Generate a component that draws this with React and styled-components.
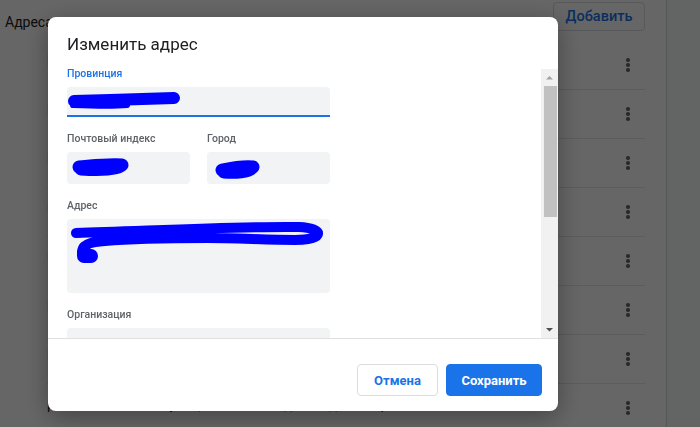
import React from "react";
import styled, { createGlobalStyle } from "styled-components";

const GlobalStyle = createGlobalStyle`
  * { box-sizing: border-box; }
  html, body { margin: 0; height: 100%; }
  body {
    font-family: Roboto, "Noto Sans", Arial, sans-serif;
    background: #fff;
    overflow: hidden;
  }
`;

const addresses = [
  "Россия, г. Москва, ул. Тверская, д. 7, кв. 12",
  "Россия, г. Казань, ул. Баумана, д. 15",
  "Россия, г. Самара, ул. Ленинградская, д. 3",
  "Россия, г. Тула, пр. Ленина, д. 40, кв. 8",
  "Россия, г. Пермь, ул. Сибирская, д. 22",
  "Россия, г. Омск, ул. Лермонтова, д. 9",
  "Россия, г. Томск, ул. Советская, д. 51",
  "россия, г. Москва, улица Новослободская, д. 18, строение 1",
];

const Page = styled.div`
  display: grid;
  grid-template-columns: 667px 1fr;
  height: 100vh;
  background: #f8f9fa;
`;

const Card = styled.section`
  background: #fff;
  border-right: 1px solid #d5d7da;
`;

const CardHeader = styled.header`
  display: flex;
  justify-content: space-between;
  align-items: flex-start;
  height: 41px;
  padding: 0 21px 0 5px;
`;

const CardTitle = styled.h2`
  margin: 13px 0 0;
  font-size: 14px;
  line-height: 18px;
  font-weight: 400;
  color: #202124;
`;

const OutlineButton = styled.button`
  margin-top: 2px;
  width: 92px;
  height: 29px;
  padding: 0;
  border: 1px solid #dadce0;
  border-radius: 4px;
  background: #fff;
  color: #1a73e8;
  font-family: inherit;
  font-size: 14.5px;
  font-weight: 500;
`;

const Row = styled.div`
  display: flex;
  align-items: center;
  justify-content: space-between;
  height: 49px;
  margin: 0 21px 0 47px;
  padding-right: 5px;
  border-bottom: 1px solid #e3e5e8;
  font-size: 14px;
  color: #202124;
`;

const RowText = styled.span`
  margin-bottom: 8px;
`;

const Kebab = styled.span`
  display: flex;
  flex-direction: column;
  align-items: center;
  gap: 1.5px;
  width: 24px;

  i {
    width: 3.5px;
    height: 3.5px;
    border-radius: 50%;
    background: #6a6a6a;
  }
`;

const Overlay = styled.div`
  position: fixed;
  inset: 0;
  display: flex;
  align-items: flex-start;
  padding: 17px 0 0 48px;
  background: rgba(0, 0, 0, 0.6);
`;

const Dialog = styled.div`
  display: flex;
  flex-direction: column;
  width: 510px;
  height: 394px;
  background: #fff;
  border-radius: 8px;
  box-shadow: 0 6px 24px rgba(0, 0, 0, 0.35);
  overflow: hidden;
`;

const DialogTitle = styled.h1`
  margin: 0;
  padding: 15px 19px 12px;
  font-size: 17px;
  line-height: 24px;
  font-weight: 400;
  color: #202124;
`;

const DialogBody = styled.div`
  display: flex;
  flex: 1;
  min-height: 0;
  border-bottom: 1px solid #e0e0e0;
`;

const ScrollArea = styled.div`
  flex: 1;
  overflow: hidden;
`;

const Scrollbar = styled.div`
  display: flex;
  flex-direction: column;
  width: 17px;
  margin-top: 1px;
  background: #f1f1f1;
`;

const ScrollArrow = styled.div`
  height: 17px;
  flex-shrink: 0;

  svg {
    display: block;
  }
`;

const ScrollThumb = styled.div`
  height: 131px;
  margin: 0 1px 0 3px;
  background: #c1c1c1;
`;

const ScrollGap = styled.div`
  flex: 1;
`;

const Form = styled.div`
  display: flex;
  flex-direction: column;
  gap: 16px;
  width: 282px;
  padding: 0 0 56px 19px;
`;

const FieldRow = styled.div`
  display: grid;
  grid-template-columns: 1fr 1fr;
  gap: 17px;
`;

const Group = styled.div`
  display: flex;
  flex-direction: column;
`;

const Label = styled.label`
  margin-bottom: 7px;
  font-size: 10.5px;
  line-height: 12px;
  font-weight: 500;
  color: ${(p) => (p.$active ? "#1a73e8" : "#5f6368")};
`;

const Field = styled.div`
  height: ${(p) => p.$h || 32}px;
  background: #f1f3f4;
  border-radius: ${(p) => (p.$active ? "4px 4px 0 0" : "4px")};
  border-bottom: ${(p) => (p.$active ? "2px solid #1a73e8" : "none")};

  svg {
    display: block;
    width: 100%;
    height: 100%;
  }
`;

const Footer = styled.footer`
  display: flex;
  justify-content: flex-end;
  gap: 8px;
  height: 72px;
  padding: 25px 16px 15px;
`;

const Button = styled.button`
  width: ${(p) => p.$w}px;
  height: 32px;
  padding: 0;
  border-radius: 4px;
  border: 1px solid ${(p) => (p.$primary ? "#1a73e8" : "#dadce0")};
  background: ${(p) => (p.$primary ? "#1a73e8" : "#fff")};
  color: ${(p) => (p.$primary ? "#fff" : "#1a73e8")};
  font-family: inherit;
  font-size: 13px;
  font-weight: 700;
`;

// hand-drawn marker strokes over the filled values
const Scribble = ({ w, h, children }) => (
  <svg viewBox={`0 0 ${w} ${h}`} preserveAspectRatio="none">
    <g
      fill="none"
      stroke="#0000ff"
      strokeLinecap="round"
      strokeLinejoin="round"
    >
      {children}
    </g>
  </svg>
);

const Arrow = ({ down }) => (
  <svg width="17" height="17" viewBox="0 0 17 17">
    <path
      d={down ? "M5 7 L8.5 10.5 L12 7 Z" : "M5 10.5 L8.5 7 L12 10.5 Z"}
      fill={down ? "#505050" : "#a3a3a3"}
    />
  </svg>
);

export default function App() {
  return (
    <>
      <GlobalStyle />
      <Page>
        <Card>
          <CardHeader>
            <CardTitle>Адреса</CardTitle>
            <OutlineButton>Добавить</OutlineButton>
          </CardHeader>
          {addresses.map((a) => (
            <Row key={a}>
              <RowText>{a}</RowText>
              <Kebab>
                <i />
                <i />
                <i />
              </Kebab>
            </Row>
          ))}
        </Card>
        <div />
      </Page>

      <Overlay>
        <Dialog>
          <DialogTitle>Изменить адрес</DialogTitle>
          <DialogBody>
            <ScrollArea>
              <Form>
                <Group>
                  <Label $active>Провинция</Label>
                  <Field $active $h={30}>
                    <Scribble w={263} h={28}>
                      <path strokeWidth="12" d="M7 14 C 40 13, 80 12, 107 11" />
                      <path strokeWidth="6" d="M6 18 C 30 19, 50 19, 60 18" />
                    </Scribble>
                  </Field>
                </Group>
                <FieldRow>
                  <Group>
                    <Label>Почтовый индекс</Label>
                    <Field>
                      <Scribble w={123} h={32}>
                        <path strokeWidth="13" d="M12 15 C 25 14, 40 12, 55 13 C 52 18, 30 18, 14 17" />
                      </Scribble>
                    </Field>
                  </Group>
                  <Group>
                    <Label>Город</Label>
                    <Field>
                      <Scribble w={123} h={32}>
                        <path strokeWidth="13" d="M15 18 C 25 16, 38 14, 46 15 C 42 20, 28 21, 17 20" />
                      </Scribble>
                    </Field>
                  </Group>
                </FieldRow>
                <Group>
                  <Label>Адрес</Label>
                  <Field $h={74}>
                    <Scribble w={263} h={74}>
                      <path
                        strokeWidth="10"
                        d="M9 14 C 80 12, 170 7, 232 8 C 258 9, 258 21, 228 21 C 200 21, 170 19, 140 19 C 100 19, 60 20, 38 22 C 22 23, 16 26, 16 30"
                      />
                      <path strokeWidth="14" d="M17 32 L 17 37 L 24 37" />
                    </Scribble>
                  </Field>
                </Group>
                <Group>
                  <Label>Организация</Label>
                  <Field />
                </Group>
                <Group>
                  <Label>Телефон</Label>
                  <Field />
                </Group>
                <Group>
                  <Label>Электронная почта</Label>
                  <Field />
                </Group>
              </Form>
            </ScrollArea>
            <Scrollbar>
              <ScrollArrow>
                <Arrow />
              </ScrollArrow>
              <ScrollThumb />
              <ScrollGap />
              <ScrollArrow>
                <Arrow down />
              </ScrollArrow>
            </Scrollbar>
          </DialogBody>
          <Footer>
            <Button $w={81}>Отмена</Button>
            <Button $w={96} $primary>
              Сохранить
            </Button>
          </Footer>
        </Dialog>
      </Overlay>
    </>
  );
}
